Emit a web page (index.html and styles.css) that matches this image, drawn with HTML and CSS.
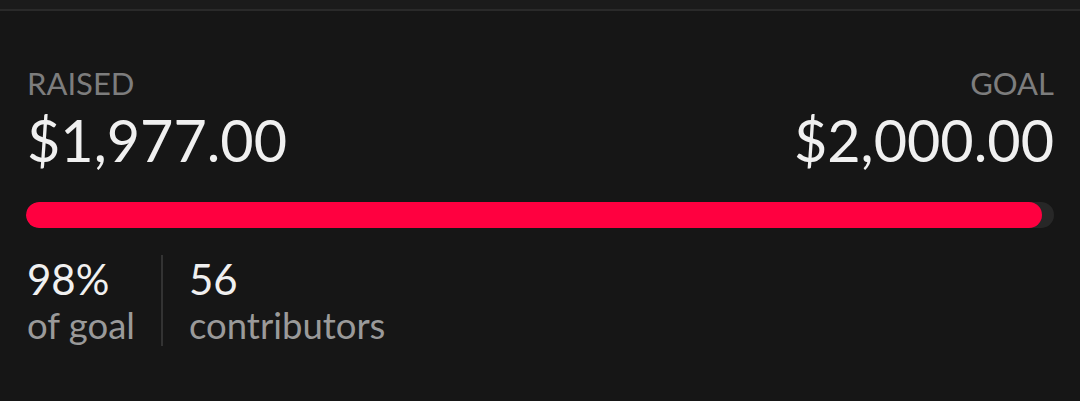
FILE: index.html
```html
<!DOCTYPE html>
<html>
<head>
<meta charset="utf-8">
<link rel="stylesheet" href="styles.css">
</head>
<body>
<div class="topbar"></div>
<section class="funding">
  <div class="totals">
    <div class="col">
      <div class="label">RAISED</div>
      <div class="amount">$1,977.00</div>
    </div>
    <div class="col right">
      <div class="label">GOAL</div>
      <div class="amount">$2,000.00</div>
    </div>
  </div>
  <div class="track"><div class="fill" style="width: 98.8%"></div></div>
  <div class="stats">
    <div class="stat">
      <div class="num">98%</div>
      <div class="desc">of goal</div>
    </div>
    <div class="divider"></div>
    <div class="stat">
      <div class="num">56</div>
      <div class="desc">contributors</div>
    </div>
  </div>
</section>
</body>
</html>
```
FILE: styles.css
```css
html, body {
  margin: 0;
  padding: 0;
  background: #161616;
  font-family: Lato, "Open Sans", sans-serif;
}
.topbar {
  height: 9px;
  background: #1b1b1b;
  border-bottom: 2px solid #2a2a2a;
}
.funding {
  padding: 54px 26px 0 26px;
}
.totals {
  display: flex;
  justify-content: space-between;
}
.col {
  display: flex;
  flex-direction: column;
  padding-left: 1px;
}
.col.right {
  align-items: flex-end;
  padding-left: 0;
}
.label {
  font-size: 31px;
  line-height: 36px;
  color: #7d7d7d;
}
.amount {
  margin-top: 7px;
  font-size: 57.5px;
  line-height: 64px;
  color: #f0f0f0;
}
.track {
  margin-top: 30px;
  height: 26px;
  border-radius: 13px;
  background: #272727;
  overflow: hidden;
}
.fill {
  height: 100%;
  border-radius: 13px;
  background: #ff0040;
}
.stats {
  margin-top: 27px;
  display: flex;
  align-items: stretch;
}
.stat {
  display: flex;
  flex-direction: column;
  padding-left: 1px;
}
.num {
  font-size: 42px;
  line-height: 48px;
  color: #f0f0f0;
}
.desc {
  margin-top: 1px;
  font-size: 36.5px;
  line-height: 42px;
  color: #9a9a9a;
}
.divider {
  width: 2px;
  background: #333333;
  margin: 0 25px 0 26px;
}
```
